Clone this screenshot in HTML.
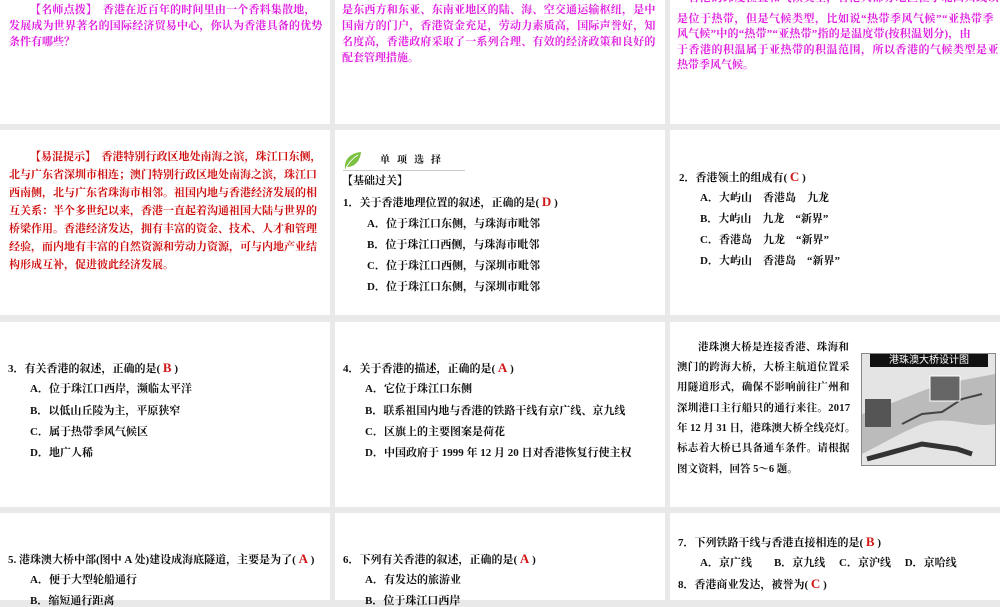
<!DOCTYPE html>
<html><head><meta charset="utf-8"><style>
body{margin:0;width:1000px;height:600px;background:#e9e9e9;position:relative;overflow:hidden;font-family:"Liberation Serif","Noto Serif CJK SC",serif;}
.p{position:absolute;background:#fff;overflow:hidden}
.t{position:absolute;white-space:nowrap;font-size:11px;font-weight:bold;color:#111;line-height:12px}
.m{color:#e020e0}
.r{color:#d01010}
.a{color:#d01818;font-size:13px;font-family:"Liberation Serif",serif}
</style></head><body>
<div class="p" style="left:0;top:0;width:330px;height:124px"></div>
<div class="p" style="left:335px;top:0;width:330px;height:124px"></div>
<div class="p" style="left:670px;top:0;width:330px;height:124px"></div>
<div class="p" style="left:0;top:130px;width:330px;height:185px"></div>
<div class="p" style="left:335px;top:130px;width:330px;height:185px"></div>
<div class="p" style="left:670px;top:130px;width:330px;height:185px"></div>
<div class="p" style="left:0;top:322px;width:330px;height:185px"></div>
<div class="p" style="left:335px;top:322px;width:330px;height:185px"></div>
<div class="p" style="left:670px;top:322px;width:330px;height:185px"></div>
<div class="p" style="left:0;top:513px;width:330px;height:87px"></div>
<div class="p" style="left:335px;top:513px;width:330px;height:87px"></div>
<div class="p" style="left:670px;top:513px;width:330px;height:87px"></div>

<!-- row1 -->
<div class="t m" style="left:30px;top:4px;letter-spacing:0.2px">【名师点拨】　香港在近百年的时间里由一个香料集散地，</div>
<div class="t m" style="left:9px;top:20px;letter-spacing:0.2px">发展成为世界著名的国际经济贸易中心，你认为香港具备的优势</div>
<div class="t m" style="left:9px;top:36px">条件有哪些？</div>

<div class="t m" style="left:342px;top:4px;letter-spacing:0.2px">是东西方和东亚、东南亚地区的陆、海、空交通运输枢纽，是中</div>
<div class="t m" style="left:342px;top:20px;letter-spacing:0.2px">国南方的门户，香港资金充足，劳动力素质高，国际声誉好，知</div>
<div class="t m" style="left:342px;top:36px;letter-spacing:0.2px">名度高，香港政府采取了一系列合理、有效的经济政策和良好的</div>
<div class="t m" style="left:342px;top:52px">配套管理措施。</div>

<div class="t m" style="left:677px;top:-8px;letter-spacing:0.5px">　香港的纬度位置和气候类型，香港大部分地区位于北回归线以南</div>
<div class="t m" style="left:677px;top:13px;letter-spacing:0.5px">是位于热带，但是气候类型，比如说“热带季风气候”“亚热带季</div>
<div class="t m" style="left:677px;top:28px;letter-spacing:0.2px">风气候”中的“热带”“亚热带”指的是温度带(按积温划分)，由</div>
<div class="t m" style="left:677px;top:44px;letter-spacing:0.5px">于香港的积温属于亚热带的积温范围，所以香港的气候类型是亚</div>
<div class="t m" style="left:677px;top:59px">热带季风气候。</div>

<!-- row2 -->
<div class="t r" style="left:30px;top:151px">【易混提示】　香港特别行政区地处南海之滨，珠江口东侧，</div>
<div class="t r" style="left:9px;top:169px">北与广东省深圳市相连；澳门特别行政区地处南海之滨，珠江口</div>
<div class="t r" style="left:9px;top:187px">西南侧，北与广东省珠海市相邻。祖国内地与香港经济发展的相</div>
<div class="t r" style="left:9px;top:205px">互关系：半个多世纪以来，香港一直起着沟通祖国大陆与世界的</div>
<div class="t r" style="left:9px;top:223px">桥梁作用。香港经济发达，拥有丰富的资金、技术、人才和管理</div>
<div class="t r" style="left:9px;top:241px">经验，而内地有丰富的自然资源和劳动力资源，可与内地产业结</div>
<div class="t r" style="left:9px;top:259px">构形成互补，促进彼此经济发展。</div>

<svg style="position:absolute;left:343px;top:151px" width="20" height="19" viewBox="0 0 20 19"><path d="M2 18 C1 9 7 2 18 1 C17 10 12 16 4 16 Z" fill="#7cc142"/><path d="M3 17 C6 11 10 7 15 4" stroke="#fff" stroke-width="1" fill="none"/></svg>
<div class="t" style="left:380px;top:155px;letter-spacing:7px;font-size:10px">单项选择</div>
<div style="position:absolute;left:343px;top:170px;width:122px;height:1px;background:#ccc"></div>
<div class="t" style="left:342px;top:175px">【基础过关】</div>
<div class="t" style="left:343px;top:196px">1．关于香港地理位置的叙述，正确的是( <span class="a">D</span> )</div>
<div class="t" style="left:367px;top:218px">A．位于珠江口东侧，与珠海市毗邻</div>
<div class="t" style="left:367px;top:239px">B．位于珠江口西侧，与珠海市毗邻</div>
<div class="t" style="left:367px;top:260px">C．位于珠江口西侧，与深圳市毗邻</div>
<div class="t" style="left:367px;top:281px">D．位于珠江口东侧，与深圳市毗邻</div>

<div class="t" style="left:679px;top:171px">2．香港领土的组成有( <span class="a">C</span> )</div>
<div class="t" style="left:700px;top:192px">A．大屿山　香港岛　九龙</div>
<div class="t" style="left:700px;top:213px">B．大屿山　九龙　“新界”</div>
<div class="t" style="left:700px;top:234px">C．香港岛　九龙　“新界”</div>
<div class="t" style="left:700px;top:255px">D．大屿山　香港岛　“新界”</div>

<!-- row3 -->
<div class="t" style="left:8px;top:362px">3．有关香港的叙述，正确的是( <span class="a">B</span> )</div>
<div class="t" style="left:30px;top:383px">A．位于珠江口西岸，濒临太平洋</div>
<div class="t" style="left:30px;top:405px">B．以低山丘陵为主，平原狭窄</div>
<div class="t" style="left:30px;top:426px">C．属于热带季风气候区</div>
<div class="t" style="left:30px;top:447px">D．地广人稀</div>

<div class="t" style="left:343px;top:362px">4．关于香港的描述，正确的是( <span class="a">A</span> )</div>
<div class="t" style="left:365px;top:383px">A．它位于珠江口东侧</div>
<div class="t" style="left:365px;top:405px">B．联系祖国内地与香港的铁路干线有京广线、京九线</div>
<div class="t" style="left:365px;top:426px">C．区旗上的主要图案是荷花</div>
<div class="t" style="left:365px;top:447px">D．中国政府于 1999 年 12 月 20 日对香港恢复行使主权</div>

<div class="t" style="left:698px;top:342px;font-size:10.5px;letter-spacing:0.3px">港珠澳大桥是连接香港、珠海和</div>
<div class="t" style="left:677px;top:362px;font-size:10.5px;letter-spacing:0.3px">澳门的跨海大桥，大桥主航道位置采</div>
<div class="t" style="left:677px;top:382px;font-size:10.5px;letter-spacing:0.3px">用隧道形式，确保不影响前往广州和</div>
<div class="t" style="left:677px;top:403px;font-size:10.5px;letter-spacing:0.3px">深圳港口主行船只的通行来往。2017</div>
<div class="t" style="left:677px;top:423px;font-size:10.5px">年 12 月 31 日，港珠澳大桥全线亮灯。</div>
<div class="t" style="left:677px;top:443px;font-size:10.5px;letter-spacing:0.3px">标志着大桥已具备通车条件。请根据</div>
<div class="t" style="left:677px;top:464px;font-size:10.5px">图文资料，回答 5～6 题。</div>

<div style="position:absolute;left:861px;top:353px;width:133px;height:111px;background:#e4e4e4;border:1px solid #888;overflow:hidden">
<div style="position:absolute;left:8px;top:0;width:118px;height:13px;background:#111;color:#fff;font-size:10px;line-height:13px;text-align:center;font-family:'Liberation Sans','Noto Sans CJK SC',sans-serif">港珠澳大桥设计图</div>
<svg width="133" height="111" style="position:absolute;left:0;top:0"><path d="M0 60 C30 50 50 40 80 30 L133 20 L133 70 C110 75 90 60 60 70 C40 78 20 90 0 100 Z" fill="#bbb"/><path d="M40 70 L60 60 L80 58 L100 45 L120 40" stroke="#444" stroke-width="2" fill="none"/><rect x="3" y="45" width="26" height="28" fill="#555"/><rect x="68" y="22" width="30" height="25" fill="#666" stroke="#fff"/><path d="M5 105 L60 90 L95 95 L110 100" stroke="#333" stroke-width="5" fill="none"/></svg>
</div>

<!-- row4 -->
<div class="t" style="left:8px;top:553px">5. 港珠澳大桥中部(图中 A 处)建设成海底隧道，主要是为了( <span class="a">A</span> )</div>
<div class="t" style="left:30px;top:574px">A．便于大型轮船通行</div>
<div class="t" style="left:30px;top:595px">B．缩短通行距离</div>
<div class="t" style="left:343px;top:553px">6．下列有关香港的叙述，正确的是( <span class="a">A</span> )</div>
<div class="t" style="left:365px;top:574px">A．有发达的旅游业</div>
<div class="t" style="left:365px;top:595px">B．位于珠江口西岸</div>
<div class="t" style="left:678px;top:536px">7．下列铁路干线与香港直接相连的是( <span class="a">B</span> )</div>
<div class="t" style="left:700px;top:557px">A．京广线　　B．京九线　 C．京沪线　 D．京哈线</div>
<div class="t" style="left:678px;top:578px">8．香港商业发达，被誉为( <span class="a">C</span> )</div>
</body></html>
